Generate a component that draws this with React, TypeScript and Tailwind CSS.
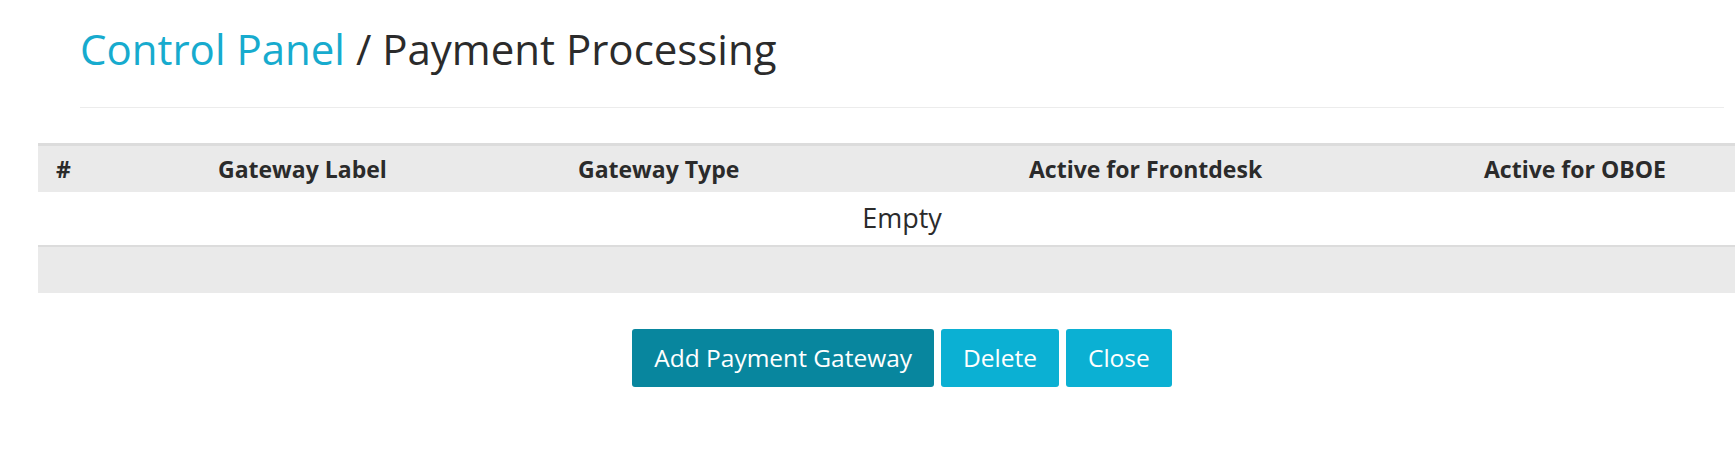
const columns = [
  { label: '#', pad: 'pl-[18px]' },
  { label: 'Gateway Label', pad: 'pl-[18px]' },
  { label: 'Gateway Type', pad: 'pl-[18px]' },
  { label: 'Active for Frontdesk', pad: 'pl-[18px]' },
  { label: 'Active for OBOE', pad: 'pl-[18px]' },
]

const PaymentProcessing = () => {
  return (
    <div className="ml-[38px] w-[1728px] shrink-0">
      <div className="px-[42px]">
        <h2 className="pt-[21px] text-[42px] leading-[56px] font-normal text-[#2b2b2b]">
          <a href="#" className="text-[#17abce]">
            Control Panel
          </a>{' '}
          / Payment Processing
        </h2>
        <hr className="mt-[30px] border-0 border-t border-[#ececec]" />
      </div>

      <div className="mt-[35px] border-t-[3px] border-[#dcdcdc]">
        <div className="grid h-[46px] grid-cols-[162px_360px_451px_455px_300px] items-center bg-[#eaeaea] text-[23px] font-bold text-[#2b2b2b]">
          {columns.map((c) => (
            <div key={c.label} className={c.pad}>
              {c.label}
            </div>
          ))}
        </div>
        <div className="flex h-[53px] items-center justify-center bg-white text-[27px] text-[#2b2b2b]">
          Empty
        </div>
        <div className="h-[48px] border-t-2 border-[#dcdcdc] bg-[#eaeaea]" />
      </div>

      <div className="mt-[36px] flex justify-center gap-[7px]">
        <button className="flex h-[58px] items-center rounded-[3px] bg-[#08869e] px-[22px] text-[24.5px] text-white">
          Add Payment Gateway
        </button>
        <button className="flex h-[58px] items-center rounded-[3px] bg-[#0bb0d3] px-[22px] text-[24.5px] text-white">
          Delete
        </button>
        <button className="flex h-[58px] items-center rounded-[3px] bg-[#0bb0d3] px-[22px] text-[24.5px] text-white">
          Close
        </button>
      </div>
    </div>
  )
}

export default function App() {
  return (
    <div
      className="flex h-[451px] w-[1735px] overflow-hidden bg-white"
      style={{ fontFamily: '"Open Sans", "Liberation Sans", sans-serif' }}
    >
      <PaymentProcessing />
    </div>
  )
}
